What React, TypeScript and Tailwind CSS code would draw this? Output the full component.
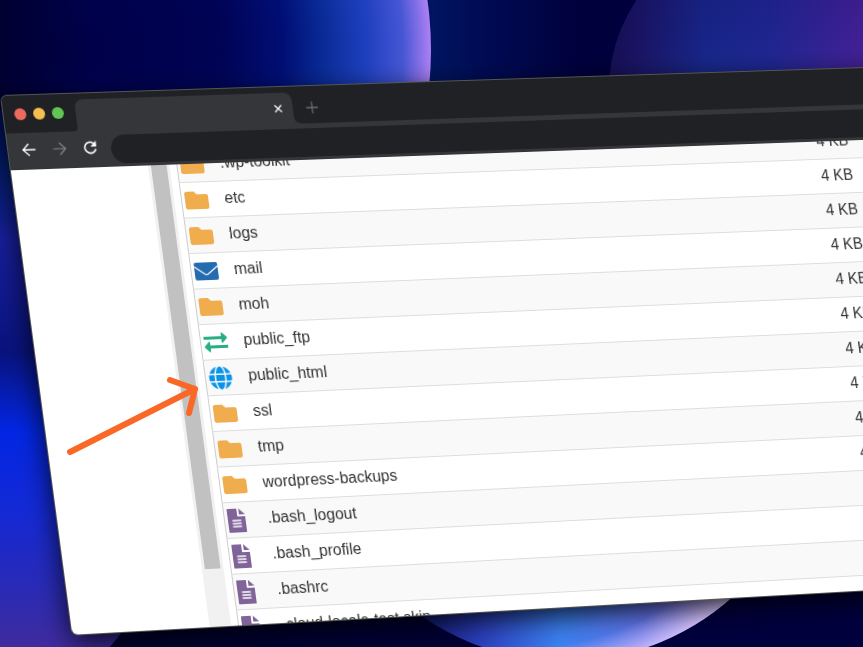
import React from 'react';
import { FaFolder, FaGlobe } from 'react-icons/fa';

type FileKind = 'folder' | 'mail' | 'ftp' | 'web' | 'file';

interface Entry {
  name: string;
  kind: FileKind;
  size?: string;
}

const entries: Entry[] = [
  { name: '.wp-toolkit', kind: 'folder', size: '4 KB' },
  { name: 'etc', kind: 'folder', size: '4 KB' },
  { name: 'logs', kind: 'folder', size: '4 KB' },
  { name: 'mail', kind: 'mail', size: '4 KB' },
  { name: 'moh', kind: 'folder', size: '4 KB' },
  { name: 'public_ftp', kind: 'ftp', size: '4 KB' },
  { name: 'public_html', kind: 'web', size: '4 KB' },
  { name: 'ssl', kind: 'folder', size: '4 KB' },
  { name: 'tmp', kind: 'folder', size: '4 KB' },
  { name: 'wordpress-backups', kind: 'folder', size: '4 KB' },
  { name: '.bash_logout', kind: 'file' },
  { name: '.bash_profile', kind: 'file' },
  { name: '.bashrc', kind: 'file' },
  { name: '.cloud-locale-test.skip', kind: 'file' },
];

const EntryIcon: React.FC<{ kind: FileKind }> = ({ kind }) => {
  switch (kind) {
    case 'folder':
      return <FaFolder className="size-6 text-[#f0ad4e]" />;
    case 'mail':
      return (
        <svg viewBox="0 0 24 24" className="size-6">
          <rect y="3" width="24" height="18" rx="2" fill="#246bb0" />
          <path d="M0 7l10.500 8q1.500 1 3 0L24 7" fill="none" stroke="#fff" strokeWidth="1.2" />
        </svg>
      );
    case 'web':
      return <FaGlobe className="size-6 text-[#0a94e8]" />;
    case 'ftp':
      return (
        <svg viewBox="0 0 24 24" className="size-6 text-[#27ae83]" fill="currentColor">
          <path d="M0 6h18V3c0-.8.8-1 1.300-.6l4.300 4.400c.4.4.4 1 0 1.400l-4.300 4.400c-.5.4-1.300.2-1.300-.6V9H0z" />
          <path d="M24 15H6v-3c0-.8-.8-1-1.300-.6L.4 15.800c-.4.4-.4 1 0 1.400l4.300 4.400c.5.4 1.300.2 1.300-.6v-3h18z" />
        </svg>
      );
    default:
      return (
        <svg viewBox="0 0 24 24" className="size-6" fill="#7f6399">
          <path d="M1 0h9v7c0 .6.4 1 1 1h7v15c0 .6-.4 1-1 1H1c-.6 0-1-.4-1-1V1c0-.6.4-1 1-1z" />
          <path d="M12 0l6 6h-6z" />
          <path d="M4.500 12h9M4.500 15h9M4.500 18h9" stroke="#fff" strokeWidth="1.5" />
        </svg>
      );
  }
};

const Wallpaper: React.FC = () => (
  <svg
    className="absolute inset-0 h-full w-full"
    viewBox="0 0 863 647"
    preserveAspectRatio="xMidYMid slice"
    aria-hidden="true"
  >
    <defs>
      <radialGradient id="orbTop" gradientUnits="userSpaceOnUse" cx="80" cy="50" r="351">
        <stop offset="0" stopColor="#000048" />
        <stop offset="0.4" stopColor="#000354" />
        <stop offset="0.58" stopColor="#000e74" />
        <stop offset="0.7" stopColor="#0a2c98" />
        <stop offset="0.82" stopColor="#1f40c0" />
        <stop offset="0.92" stopColor="#4656d4" />
        <stop offset="1" stopColor="#ad80f4" />
      </radialGradient>
      <linearGradient id="corner" x1="0" y1="0" x2="1" y2="0">
        <stop offset="0" stopColor="#000030" />
        <stop offset="1" stopColor="#000030" stopOpacity="0" />
      </linearGradient>
      <linearGradient id="glow" x1="0" y1="0" x2="1" y2="0">
        <stop offset="0" stopColor="#001a68" />
        <stop offset="0.5" stopColor="#000a52" />
        <stop offset="1" stopColor="#00003c" />
      </linearGradient>
      <linearGradient id="orbRight" x1="0" y1="0" x2="1" y2="0">
        <stop offset="0" stopColor="#191358" />
        <stop offset="0.1" stopColor="#1d1c70" />
        <stop offset="0.3" stopColor="#1b34a4" />
        <stop offset="0.5" stopColor="#2434b0" />
        <stop offset="0.8" stopColor="#5a2cb8" />
      </linearGradient>
      <linearGradient id="orbRightTop" x1="0" y1="0" x2="0" y2="1">
        <stop offset="0" stopColor="#10054a" stopOpacity="0.5" />
        <stop offset="1" stopColor="#10054a" stopOpacity="0" />
      </linearGradient>
      <linearGradient id="orbLeft" gradientUnits="userSpaceOnUse" x1="0" y1="110" x2="0" y2="647">
        <stop offset="0" stopColor="#000a50" />
        <stop offset="0.1" stopColor="#001c6c" />
        <stop offset="0.24" stopColor="#171e9c" />
        <stop offset="0.45" stopColor="#08127c" />
        <stop offset="0.6" stopColor="#0226e4" />
        <stop offset="0.75" stopColor="#1429d4" />
        <stop offset="0.9" stopColor="#2b2ab4" />
        <stop offset="1" stopColor="#3f2b9c" />
      </linearGradient>
      <linearGradient id="orbBottom" gradientUnits="userSpaceOnUse" x1="340" y1="600" x2="720" y2="640">
        <stop offset="0" stopColor="#000040" />
        <stop offset="0.2" stopColor="#0e1670" />
        <stop offset="0.38" stopColor="#2c40c0" />
        <stop offset="0.58" stopColor="#3a80f0" />
        <stop offset="0.8" stopColor="#6272e8" />
        <stop offset="1" stopColor="#a796ee" />
      </linearGradient>
      <radialGradient id="orbRim" gradientUnits="userSpaceOnUse" cx="520" cy="380" r="305">
        <stop offset="0.88" stopColor="#e6d0ff" stopOpacity="0" />
        <stop offset="1" stopColor="#e6d0ff" stopOpacity="0.9" />
      </radialGradient>
    </defs>
    <rect width="863" height="647" fill="#00003c" />
    <rect x="400" width="180" height="160" fill="url(#glow)" />
    <circle cx="80" cy="50" r="351" fill="url(#orbTop)" />
    <rect width="90" height="110" fill="url(#corner)" />
    <circle cx="769" cy="90" r="160" fill="url(#orbRight)" />
    <circle cx="769" cy="90" r="160" fill="url(#orbRightTop)" />
    <path d="M0 110h180v467l-70 70H0z" fill="url(#orbLeft)" />
    <path d="M180 560H480V647H110z" fill="#000034" />
    <circle cx="565" cy="410" r="251" fill="url(#orbBottom)" />
    <circle cx="565" cy="410" r="251" fill="url(#orbRim)" />
  </svg>
);

const TabStrip: React.FC = () => (
  <div className="flex h-[38px] items-center bg-[#202124] pl-[11px]">
    <div className="flex gap-[7px]">
      <span className="size-3 rounded-full bg-[#ed6a5f]" />
      <span className="size-3 rounded-full bg-[#f5bf4f]" />
      <span className="size-3 rounded-full bg-[#62c655]" />
    </div>
    <svg viewBox="0 0 4 4" className="ml-2 size-1 self-end" fill="#35363a">
      <path d="M4 0c0 2.500-1.500 4-4 4h4z" />
    </svg>
    <div className="flex h-8 w-[222px] items-center justify-end self-end rounded-t-lg bg-[#35363a] pr-[11px]">
      <button aria-label="Close tab" className="text-white">
        <svg viewBox="0 0 8 8" className="size-2" stroke="currentColor" strokeWidth="1.3">
          <path d="M.5.500l7 7M7.500.500l-7 7" />
        </svg>
      </button>
    </div>
    <svg viewBox="0 0 8 8" className="size-2 self-end" fill="#35363a">
      <path d="M0 0c0 5 3 8 8 8H0z" />
    </svg>
    <button aria-label="New tab" className="mt-1.5 ml-1.5 text-[#6a6b6f]">
      <svg viewBox="0 0 12 12" className="size-3" stroke="currentColor" strokeWidth="1.3">
        <path d="M6 0v12M0 6h12" />
      </svg>
    </button>
  </div>
);

const Toolbar: React.FC = () => (
  <div className="flex h-[37px] items-start bg-[#35363a] pt-[5px] pl-[13px]">
    <div className="flex gap-[15px] pt-1 pr-[13px]">
      <button aria-label="Back" className="text-white">
        <svg viewBox="0 0 16 16" className="size-4" fill="none" stroke="currentColor" strokeWidth="1.4">
          <path d="M14.500 8H2.500M8 2L2 8l6 6" />
        </svg>
      </button>
      <button aria-label="Forward" className="text-[#85868a]">
        <svg viewBox="0 0 16 16" className="size-4" fill="none" stroke="currentColor" strokeWidth="1.2">
          <path d="M1.500 8h12M8 2l6 6-6 6" />
        </svg>
      </button>
      <button aria-label="Reload" className="text-white">
        <svg viewBox="0 0 16 16" className="size-4" fill="none" stroke="currentColor" strokeWidth="1.6">
          <path d="M13.500 9.500A5.600 5.600 0 1 1 12 4" />
          <path d="M14.300 1v6h-6z" fill="currentColor" stroke="none" />
        </svg>
      </button>
    </div>
    <input
      type="text"
      aria-label="Address"
      className="h-[29px] flex-1 rounded-l-full bg-[#202124] px-4 text-sm text-white outline-none"
    />
  </div>
);

const FileTable: React.FC = () => (
  <table className="-mt-[18px] w-full table-fixed border-collapse border-l border-[#ccc]">
    <colgroup>
      <col className="w-11" />
      <col className="w-[629px]" />
      <col />
    </colgroup>
    <tbody>
      {entries.map((entry) => (
        <tr key={entry.name} className="h-9 border-b border-[#ddd] odd:bg-[#f9f9f9] even:bg-white">
          <td className="pt-0.5 pl-[3px]">
            <EntryIcon kind={entry.kind} />
          </td>
          <td>{entry.name}</td>
          <td>{entry.size}</td>
        </tr>
      ))}
    </tbody>
  </table>
);

const App: React.FC = () => {
  return (
    <main className="relative h-screen overflow-hidden bg-[#00003c] font-['Liberation_Sans',Arial,sans-serif]">
      <Wallpaper />
      <div className="relative w-[130%] origin-top-left [transform:matrix3d(0.99149,-0.028,0,0.00004302,0.13114,0.9894,0,-0.00001011,0,0,1,0,1,96,0,1)]">
        <div className="overflow-hidden rounded-md shadow-[0_8px_28px_rgba(0,0,0,0.85)] ring-1 ring-[#55564f]">
          <TabStrip />
          <Toolbar />
          <div className="flex h-[466px] overflow-hidden bg-white text-base leading-5 text-[#333]">
            <div className="w-[139px] shrink-0" />
            <div className="mr-[7px] w-[22px] shrink-0 bg-[#f1f1f1] px-[3px]">
              <div className="h-[408px] bg-[#c1c1c1]" />
            </div>
            <div className="flex-1">
              <FileTable />
            </div>
          </div>
        </div>
      </div>
      <svg
        className="absolute top-[370px] left-[60px] h-[90px] w-[145px]"
        viewBox="60 370 145 90"
        fill="none"
        stroke="#f96826"
        strokeWidth="6"
        strokeLinecap="round"
        strokeLinejoin="round"
      >
        <path d="M70 452l125-63M170 380l25 9-6 24" />
      </svg>
    </main>
  );
};

export default App;
